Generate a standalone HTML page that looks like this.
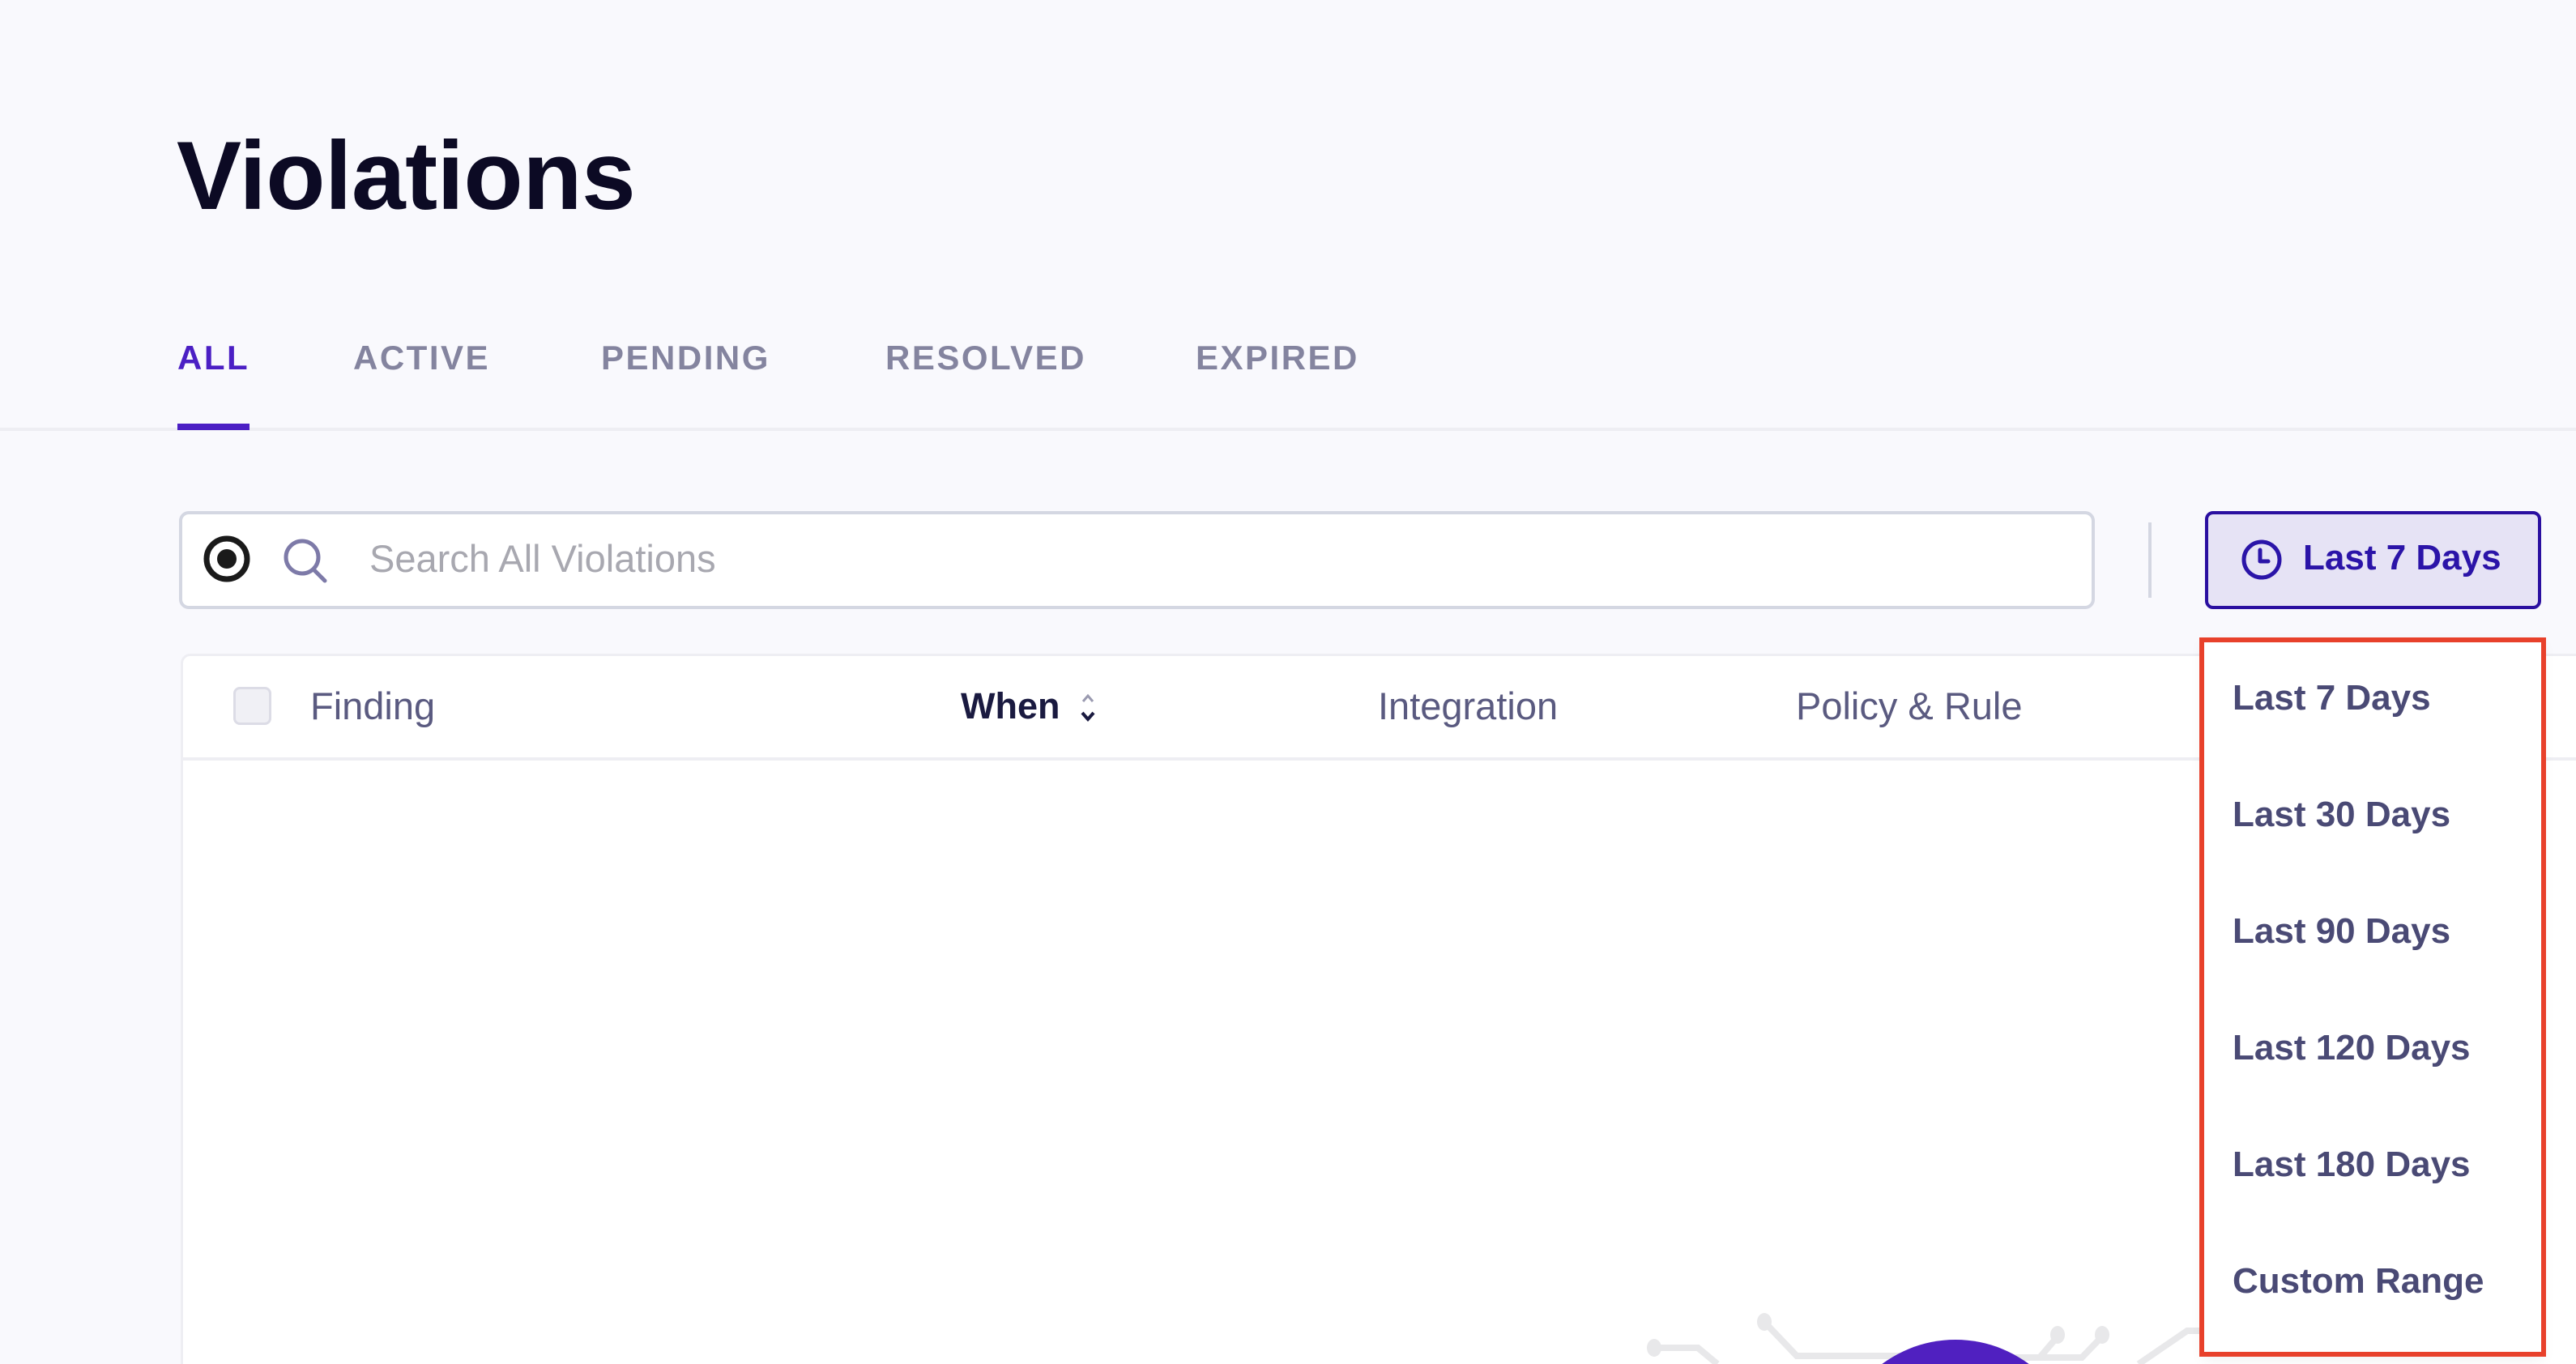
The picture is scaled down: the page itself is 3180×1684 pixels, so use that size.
<!DOCTYPE html>
<html><head><meta charset="utf-8"><style>
*{margin:0;padding:0;box-sizing:border-box}
html,body{width:3180px;height:1684px;overflow:hidden}
body{background:#f9f9fd;font-family:"Liberation Sans",sans-serif;position:relative}
.a{position:absolute;white-space:nowrap}
.tab{position:absolute;top:418px;font-size:42px;font-weight:bold;color:#84849f;letter-spacing:2.5px}
.hd{position:absolute;top:844px;font-size:47px;color:#5a5a80}
.it{position:absolute;left:2756px;font-size:44px;font-weight:bold;color:#4a4a75;letter-spacing:0}
</style></head><body>
<div class="a" style="left:218px;top:148px;font-size:120px;font-weight:bold;color:#0c0a24;letter-spacing:-0.5px">Violations</div>
<div class="tab" style="left:219px;color:#4b1fc4">ALL</div>
<div class="tab" style="left:436px">ACTIVE</div>
<div class="tab" style="left:742px">PENDING</div>
<div class="tab" style="left:1093px">RESOLVED</div>
<div class="tab" style="left:1476px">EXPIRED</div>
<div class="a" style="left:0;top:528px;width:3180px;height:4px;background:#eeeef3"></div>
<div class="a" style="left:219px;top:523px;width:89px;height:8px;background:#4b1fc4"></div>

<div class="a" style="left:221px;top:631px;width:2365px;height:121px;background:#fff;border:4px solid #d4d7e2;border-radius:12px"></div>
<svg class="a" style="left:248px;top:658px" width="64" height="64" viewBox="0 0 64 64"><circle cx="32" cy="32" r="25" fill="none" stroke="#1a1a1a" stroke-width="7"/><circle cx="32" cy="32" r="12" fill="#1a1a1a"/></svg>
<svg class="a" style="left:345px;top:660px" width="64" height="64" viewBox="0 0 64 64"><circle cx="28" cy="28" r="20" fill="none" stroke="#7d7aa8" stroke-width="5"/><path d="M42 43 L56 57" stroke="#7d7aa8" stroke-width="5" stroke-linecap="round"/></svg>
<div class="a" style="left:456px;top:662px;font-size:47px;color:#a8a8b0">Search All Violations</div>
<div class="a" style="left:2652px;top:645px;width:4px;height:93px;background:#d4d7e2"></div>

<div class="a" style="left:2722px;top:631px;width:415px;height:121px;background:#e6e3f5;border:4px solid #2a0fa0;border-radius:10px"></div>
<svg class="a" style="left:2765px;top:664px" width="54" height="54" viewBox="0 0 54 54"><circle cx="27" cy="27" r="22" fill="none" stroke="#2a14a8" stroke-width="5"/><path d="M25 15 V29 H35" fill="none" stroke="#2a14a8" stroke-width="5" stroke-linecap="round" stroke-linejoin="round"/></svg>
<div class="a" style="left:2843px;top:664px;font-size:44px;font-weight:bold;color:#2b14a8">Last 7 Days</div>

<div class="a" style="left:223px;top:807px;width:2957px;height:877px;background:#fff;border:3px solid #eeeef3;border-bottom:none;border-right:none;border-radius:12px 0 0 0"></div>
<div class="a" style="left:223px;top:935px;width:2957px;height:4px;background:#eeeef3"></div>
<div class="a" style="left:288px;top:848px;width:47px;height:47px;background:#f0f0f5;border:3px solid #dcdce6;border-radius:8px"></div>
<div class="hd" style="left:383px">Finding</div>
<div class="hd" style="left:1186px;color:#1a1a40;font-weight:bold;font-size:45px;top:846px">When</div>
<svg class="a" style="left:1330px;top:852px" width="26" height="44" viewBox="0 0 26 44"><path d="M7 14 L13 7 L19 14" fill="none" stroke="#9a9ab0" stroke-width="3"/><path d="M6 28 L13 36 L20 28" fill="none" stroke="#1a1a40" stroke-width="4"/></svg>
<div class="hd" style="left:1701px">Integration</div>
<div class="hd" style="left:2217px">Policy &amp; Rule</div>

<svg class="a" style="left:1980px;top:1560px" width="760" height="124" viewBox="0 0 760 124"><g stroke="#e8e8ea" stroke-width="8" fill="none"><path d="M62 104 H116 L140 124"/><path d="M198 72 L238 114 H420"/><path d="M505 116 H590 L615 90"/><path d="M560 90 L538 116"/><path d="M660 124 L720 83 H740"/></g><g fill="#e8e8ea"><ellipse cx="62" cy="104" rx="9" ry="11"/><ellipse cx="198" cy="72" rx="9" ry="11"/><ellipse cx="560" cy="88" rx="9" ry="11"/><ellipse cx="615" cy="88" rx="9" ry="11"/></g><circle cx="434" cy="246" r="152" fill="#5020c0"/></svg>

<div class="a" style="left:2719px;top:790px;width:420px;height:885px;background:#fff;box-shadow:0 4px 16px rgba(0,0,0,0.06)"></div>
<div class="a" style="left:2715px;top:787px;width:428px;height:888px;border:6px solid #e8412b"></div>
<div class="it" style="top:837px">Last 7 Days</div>
<div class="it" style="top:981px">Last 30 Days</div>
<div class="it" style="top:1125px">Last 90 Days</div>
<div class="it" style="top:1269px">Last 120 Days</div>
<div class="it" style="top:1413px">Last 180 Days</div>
<div class="it" style="top:1557px">Custom Range</div>
</body></html>
